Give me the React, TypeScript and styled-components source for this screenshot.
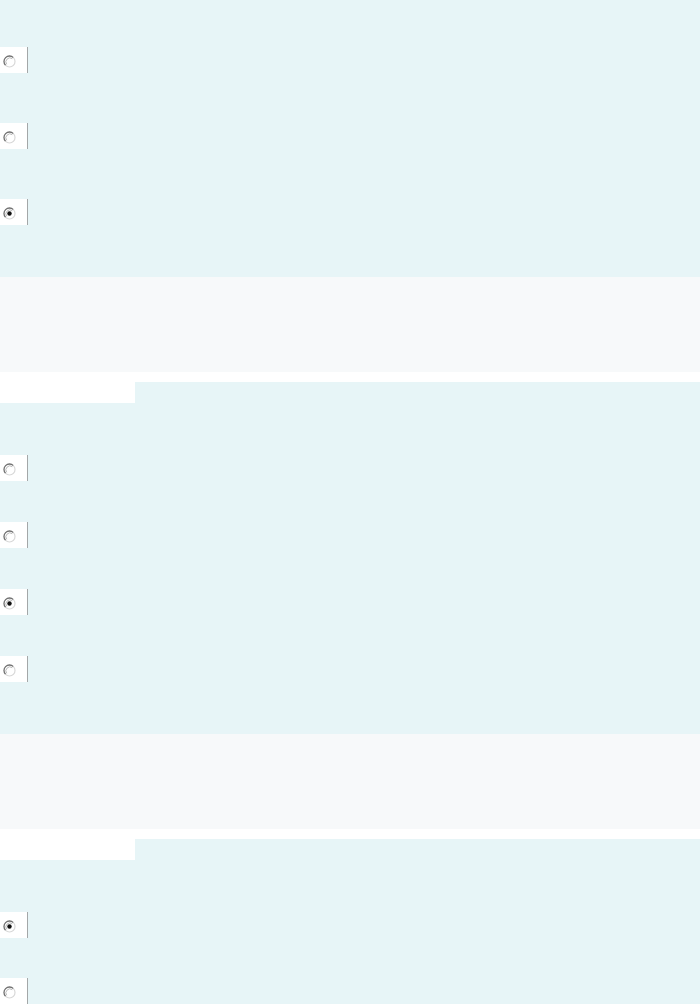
import React from "react";
import styled, { createGlobalStyle } from "styled-components";

const Global = createGlobalStyle`
  html, body { margin: 0; padding: 0; background: #ffffff; }
  body { font-family: "Liberation Sans", Arial, sans-serif; }
`;

const Page = styled.div`
  display: flex;
  flex-direction: column;
  width: 700px;
`;

const Question = styled.section`
  display: flex;
  flex-direction: column;
`;

const Spacer = styled.div`
  height: 10px;
  background: #ffffff;
`;

const TabRow = styled.div`
  display: flex;
  height: 21px;
`;

const Tab = styled.div`
  width: 135px;
  background: #ffffff;
`;

const TabFill = styled.div`
  flex: 1;
  background: #e7f5f7;
`;

const Body = styled.div<{ $top: number; $gap: number; $bottom: number }>`
  display: flex;
  flex-direction: column;
  gap: ${(p) => p.$gap}px;
  padding: ${(p) => p.$top}px 0 ${(p) => p.$bottom}px 0;
  background: #e7f5f7;
`;

const Row = styled.div`
  display: flex;
  align-items: center;
  height: 26px;
`;

const RadioCell = styled.label`
  display: flex;
  align-items: center;
  justify-content: flex-start;
  box-sizing: border-box;
  width: 28px;
  height: 26px;
  padding: 2px 0 0 3px;
  background: #ffffff;
  border-right: 1px solid #a4a7a8;
`;

const Feedback = styled.div`
  height: 95px;
  background: #f7f9fa;
`;

const Radio: React.FC<{ checked?: boolean }> = ({ checked }) => (
  <svg width="13" height="13" viewBox="0 0 13 13">
    <circle cx="6.5" cy="6.5" r="5.5" fill="#ffffff" />
    <path d="M 10.4 2.6 A 5.5 5.5 0 0 0 2.6 10.4" fill="none" stroke="#6f6f6f" strokeWidth="1.3" />
    <path d="M 2.6 10.4 A 5.5 5.5 0 0 0 10.4 2.6" fill="none" stroke="#d8d8d8" strokeWidth="1.2" />
    <path d="M 9.3 3.7 A 4 4 0 0 0 3.7 9.3" fill="none" stroke="#a8a8a8" strokeWidth="0.8" />
    {checked && <circle cx="6.5" cy="6.5" r="2.2" fill="#111111" />}
  </svg>
);

const Choice: React.FC<{ checked?: boolean }> = ({ checked }) => (
  <Row>
    <RadioCell>
      <Radio checked={checked} />
    </RadioCell>
  </Row>
);

const Header: React.FC = () => (
  <>
    <Spacer />
    <TabRow>
      <Tab />
      <TabFill />
    </TabRow>
  </>
);

export default function App() {
  return (
    <Page>
      <Global />
      <Question>
        <Body $top={47} $gap={50} $bottom={52}>
          <Choice />
          <Choice />
          <Choice checked />
        </Body>
        <Feedback />
      </Question>
      <Question>
        <Header />
        <Body $top={52} $gap={41} $bottom={52}>
          <Choice />
          <Choice />
          <Choice checked />
          <Choice />
        </Body>
        <Feedback />
      </Question>
      <Question>
        <Header />
        <Body $top={52} $gap={40} $bottom={54}>
          <Choice checked />
          <Choice />
          <Choice />
        </Body>
        <Feedback />
      </Question>
    </Page>
  );
}
